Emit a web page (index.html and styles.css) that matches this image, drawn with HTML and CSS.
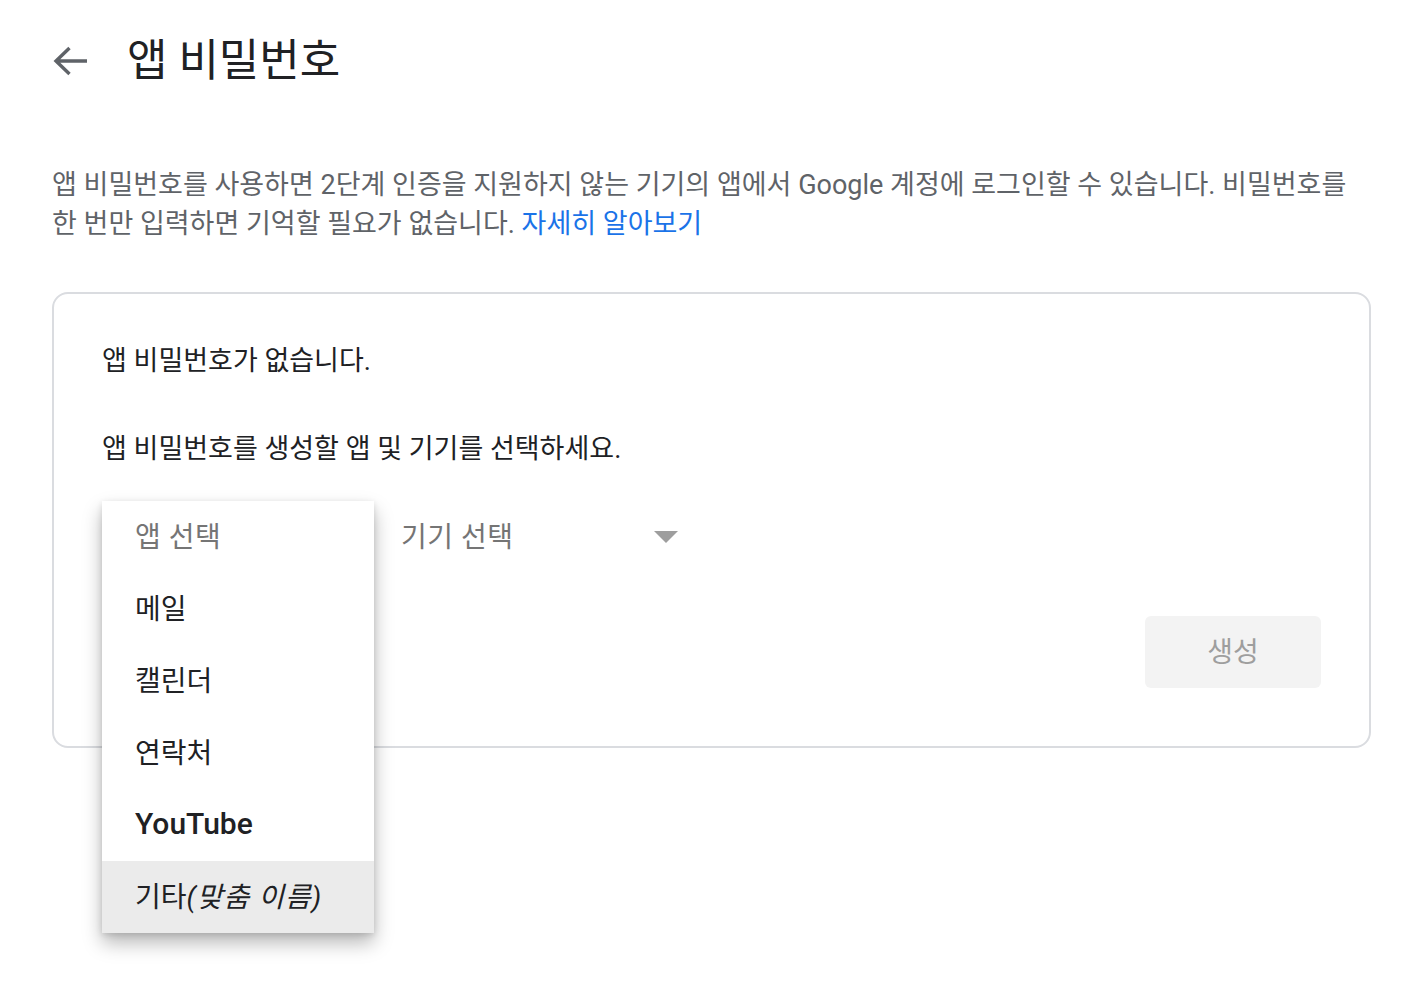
FILE: index.html
```html
<!DOCTYPE html>
<html lang="ko">
<head>
<meta charset="utf-8">
<title>앱 비밀번호</title>
<link rel="stylesheet" href="styles.css">
</head>
<body>
<div class="page">
  <header class="header">
    <button class="back" aria-label="뒤로">
      <svg width="36" height="32" viewBox="0 0 36 32"><path d="M35 16H4M17.5 3L4 16l13.5 13" fill="none" stroke="#5f6368" stroke-width="3.4"/></svg>
    </button>
    <h1 class="title">앱 비밀번호</h1>
  </header>
  <p class="desc">앱 비밀번호를 사용하면 2단계 인증을 지원하지 않는 기기의 앱에서 Google 계정에 로그인할 수 있습니다. 비밀번호를 한 번만 입력하면 기억할 필요가 없습니다. <a class="link" href="#">자세히 알아보기</a></p>
  <section class="card">
    <p class="card-text">앱 비밀번호가 없습니다.</p>
    <p class="card-text second">앱 비밀번호를 생성할 앱 및 기기를 선택하세요.</p>
    <div class="selects">
      <div class="select app">
        <span class="select-label">앱 선택</span>
        <ul class="menu">
          <li class="item placeholder">앱 선택</li>
          <li class="item">메일</li>
          <li class="item">캘린더</li>
          <li class="item">연락처</li>
          <li class="item latin">YouTube</li>
          <li class="item active">기타<em class="custom">(맞춤 이름)</em></li>
        </ul>
      </div>
      <div class="select device">
        <span class="select-label">기기 선택</span>
        <span class="caret"></span>
      </div>
    </div>
    <div class="actions">
      <button class="generate" disabled>생성</button>
    </div>
  </section>
</div>
</body>
</html>
```
FILE: styles.css
```css
* { box-sizing: border-box; }
html, body { margin: 0; padding: 0; background: #fff; }
body {
  font-family: Roboto, "Noto Sans CJK KR", sans-serif;
  color: #202124;
  min-height: 984px;
}
.page {
  padding: 0 39px 0 52px;
  min-height: 984px;
}
.header {
  display: flex;
  align-items: center;
  height: 124px;
  padding-bottom: 2px;
}
.back {
  border: 0;
  background: none;
  padding: 0;
  margin: 0;
  width: 36px;
  height: 32px;
  display: flex;
  cursor: pointer;
}
.title {
  margin: 0 0 0 39px;
  font-size: 44px;
  font-weight: 400;
  color: #202124;
  line-height: 56px;
}
.desc {
  margin: 42px 0 0 0;
  font-size: 27px;
  line-height: 39px;
  color: #5f6368;
}
.link {
  color: #1a73e8;
  text-decoration: none;
}
.card {
  margin-top: 48px;
  border: 2px solid #dadce0;
  border-radius: 16px;
  padding: 47px 47px 58px 48px;
}
.card-text {
  margin: 0;
  font-size: 27px;
  line-height: 40px;
  color: #202124;
}
.card-text.second {
  margin-top: 48px;
}
.selects {
  margin-top: 32px;
  display: flex;
  height: 72px;
}
.select {
  position: relative;
  display: flex;
  align-items: center;
  height: 72px;
  font-size: 28px;
  color: #757575;
}
.select.app {
  width: 299px;
  padding-left: 32px;
}
.select.device {
  width: 288px;
  justify-content: space-between;
}
.select-label { letter-spacing: 0.5px; padding-bottom: 4px; }
.caret {
  width: 0;
  height: 0;
  border-left: 12px solid transparent;
  border-right: 12px solid transparent;
  border-top: 12px solid #9e9e9e;
  margin-right: 11px;
}
.menu {
  position: absolute;
  left: 0;
  top: 0;
  width: 272px;
  margin: 0;
  padding: 0;
  list-style: none;
  background: #fff;
  box-shadow: 0 10px 18px rgba(0,0,0,0.28), 0 2px 6px rgba(0,0,0,0.12);
  z-index: 2;
}
.item {
  height: 72px;
  display: flex;
  align-items: center;
  padding-left: 33px;
  padding-bottom: 4px;
  font-size: 28px;
  color: #202124;
}
.item.placeholder { color: #757575; letter-spacing: 0.5px; }
.item.latin { font-weight: 500; font-size: 30px; }
.item.active { background: #ebebeb; }
.custom { font-style: italic; letter-spacing: 1px; }
.actions {
  margin-top: 43px;
  display: flex;
  justify-content: flex-end;
}
.generate {
  width: 176px;
  height: 72px;
  border: 0;
  border-radius: 6px;
  background: #f3f3f3;
  color: #9e9e9e;
  font-family: Roboto, "Noto Sans CJK KR", sans-serif;
  font-size: 28px;
  padding: 0 0 4px 0;
  margin-right: 1px;
}
```
